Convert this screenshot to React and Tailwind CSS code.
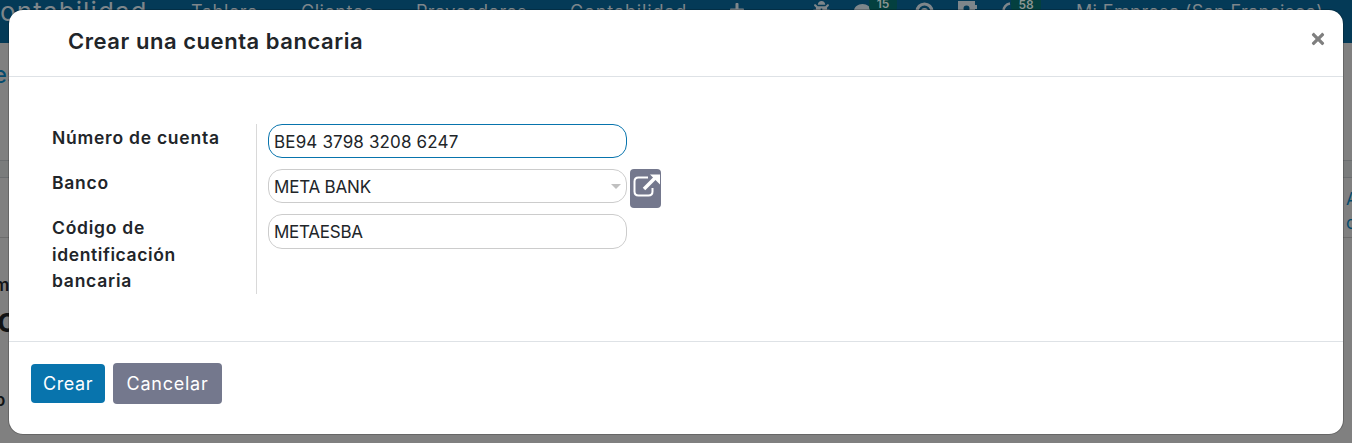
import React from "react";
import { FaBug, FaComment, FaPlus, FaTimes } from "react-icons/fa";

function NavItem({ className, children }) {
  return <span className={"shrink-0 whitespace-nowrap text-[18px] leading-[24px] " + className}>{children}</span>;
}

function ExternalIcon() {
  return (
    <svg width="31" height="26" viewBox="0 0 31 26" fill="none" stroke="white">
      <path d="M18 4.5H8.5Q4.5 4.5 4.5 8.5V18.5Q4.5 22.5 8.5 22.5H18.5Q22.5 22.5 22.5 18.5V15" strokeWidth="2" />
      <path d="M14 16L25 5" strokeWidth="3.6" />
      <path d="M20 1.5H30V11.5L26.5 8L23.5 5Z" fill="white" stroke="none" />
    </svg>
  );
}

function Page() {
  return (
    <div className="h-[443px] w-[1352px] overflow-hidden bg-[#808080]">
      <div className="h-[43px] bg-[#043a57] text-[#7e868b]">
        <div className="flex h-[24px] items-start">
          <span className="-ml-[20px] w-[211px] shrink-0 text-[26px] leading-[24px] tracking-[1.1px]">Contabilidad</span>
          <NavItem className="w-[110px] tracking-[0.5px]">Tablero</NavItem>
          <NavItem className="w-[115px] tracking-[0.5px]">Clientes</NavItem>
          <NavItem className="w-[154px] tracking-[0.3px]">Proveedores</NavItem>
          <NavItem className="w-[159px] tracking-[0.85px]">Contabilidad</NavItem>
          <FaPlus className="mt-[2px] w-[16px] shrink-0 text-[16px]" />
          <FaBug className="mt-[1px] ml-[68px] w-[17px] shrink-0 text-[17px]" />
          <FaComment className="mt-[3px] ml-[24px] w-[17px] shrink-0 text-[17px]" />
          <span className="-ml-[2px] h-[11px] w-[28px] shrink-0 rounded-b bg-[#04403f] text-center text-[12px] font-semibold leading-[8px] text-[#8b9694]">15</span>
          <svg className="mt-[2px] ml-[18px] shrink-0" width="19" height="19" viewBox="0 0 19 19" fill="none" stroke="currentColor" strokeWidth="3.2">
            <circle cx="9.5" cy="9.5" r="7.5" />
            <circle cx="9.5" cy="9.5" r="2" />
          </svg>
          <svg className="mt-[1px] ml-[23px] shrink-0" width="21" height="19" viewBox="0 0 21 19" fill="currentColor">
            <path fillRule="evenodd" d="M1 0H18V4H20V8H18V18H1ZM9.5 4.5A3 3 0 0 0 9.5 10.5A3 3 0 0 0 9.5 4.5Z" />
          </svg>
          <svg className="mt-[2px] ml-[24px] shrink-0" width="18" height="18" viewBox="0 0 18 18" fill="none" stroke="currentColor" strokeWidth="2.5">
            <path d="M8 1.5A7.5 7.5 0 1 0 16.5 9" />
          </svg>
          <span className="-ml-[9px] h-[11px] w-[30px] shrink-0 rounded-b bg-[#04403f] text-center text-[12px] font-semibold leading-[9px] text-[#8b9694]">58</span>
          <NavItem className="ml-[35px] tracking-[0.35px]">Mi Empresa (San Francisco)</NavItem>
        </div>
      </div>
      <div className="h-[117px] pt-[16px] text-[24px] leading-[32px] text-[#054b6d]">
        <span className="-ml-[7px]">es</span>
      </div>
      <div className="h-[18px] border-y border-[#6b6e70] bg-[#7a7c7c]" />
      <div className="flex h-[60px] justify-end border-b border-[#6d6d6d] pt-[9px] text-[17px] leading-[24px] text-[#054b6d]">
        <div className="w-[6px]">A<br />c</div>
      </div>
      <div className="h-[205px] pt-[35px] font-semibold text-[#111315]">
        <div className="-ml-[6px] text-[17px] leading-[24px]">m</div>
        <div className="-ml-[3px] mt-[2px] text-[34px] leading-[42px]">c</div>
        <div className="-ml-[5px] mt-[47px] text-[17px] leading-[24px]">o</div>
      </div>
    </div>
  );
}

function Field({ className, children }) {
  return (
    <div className={"flex w-[359px] items-center rounded-[14px] border pl-[5px] text-[17px] text-[#212529] " + className}>
      {children}
    </div>
  );
}

function Modal() {
  return (
    <div className="absolute left-[8px] top-[9px] flex h-[426px] w-[1336px] flex-col overflow-hidden rounded-[15px] border border-black/20 bg-white bg-clip-padding text-[#212529]">
      <header className="flex h-[67px] shrink-0 items-start justify-between border-b border-[#dee2e6] pl-[59px] pr-[17px] pt-[15px]">
        <h1 className="text-[22px] font-semibold leading-[32px] tracking-[0.55px]">Crear una cuenta bancaria</h1>
        <button className="mt-[5px] text-[#7f7f7f]" aria-label="Cerrar">
          <FaTimes className="h-[18px] w-[16px]" />
        </button>
      </header>
      <main className="flex h-[264px] shrink-0 pl-[43px] pt-[47px]">
        <div className="h-[170px] w-[205px] shrink-0 border-r border-[#d9d9d9] pt-[1px] text-[17.5px] font-semibold leading-[26.5px] tracking-[0.75px]">
          <div className="h-[45px]">Número de cuenta</div>
          <div className="h-[45px]">Banco</div>
          <div className="w-[150px]">Código de<br /><span className="tracking-[0.6px]">identificación</span><br />bancaria</div>
        </div>
        <div className="pl-[11px]">
          <Field className="h-[34px] border-[#0874ad] pt-[3px]"><span className="tracking-[0.15px]">BE94 3798 3208 6247</span></Field>
          <div className="mt-[11px] flex h-[45px] items-start gap-[3px]">
            <Field className="h-[34px] justify-between border-[#cccccc] pr-[5px]">
              <span className="pt-[3px] tracking-[-0.2px]">META BANK</span>
              <svg width="10" height="5" viewBox="0 0 10 5"><path d="M0 0H10L5 5Z" fill="#c0c0c0" /></svg>
            </Field>
            <button className="flex h-[39px] w-[31px] items-start justify-center rounded-[4px] bg-[#74788d] pt-[4px]" aria-label="Abrir"><ExternalIcon /></button>
          </div>
          <Field className="h-[35px] border-[#cccccc] pt-[2px]"><span className="tracking-[-0.25px]">METAESBA</span></Field>
        </div>
      </main>
      <footer className="flex grow items-start gap-[8px] border-t border-[#dee2e6] pl-[22px] pt-[21px] text-[18px] text-white">
        <button className="mt-[1px] h-[39px] w-[74px] rounded-[4px] bg-[#0874ad] tracking-[0.6px]">Crear</button>
        <button className="h-[41px] w-[109px] rounded-[4px] bg-[#74788d] tracking-[0.75px]">Cancelar</button>
      </footer>
    </div>
  );
}

export default function App() {
  return (
    <div className="relative h-[443px] w-[1352px] overflow-hidden font-['Inter',sans-serif]">
      <Page />
      <Modal />
    </div>
  );
}
